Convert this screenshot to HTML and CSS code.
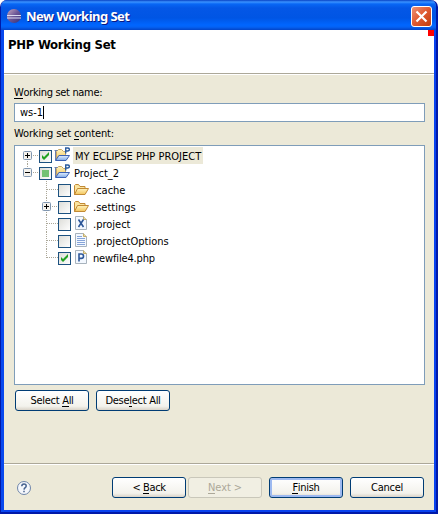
FILE: index.html
```html
<!DOCTYPE html>
<html lang="en">
<head>
<meta charset="utf-8">
<title>New Working Set</title>
<link rel="stylesheet" href="styles.css">
</head>
<body>
<svg width="0" height="0" class="defs">
  <defs>
    <linearGradient id="gold" x1="0" y1="0" x2="0" y2="1"><stop offset="0" stop-color="#fff3bd"/><stop offset="1" stop-color="#f3c55c"/></linearGradient>
    <linearGradient id="blue" x1="0" y1="0" x2="0" y2="1"><stop offset="0" stop-color="#e2efff"/><stop offset="1" stop-color="#7fa9e6"/></linearGradient>
    <linearGradient id="orb" x1="0" y1="0" x2="1" y2="1"><stop offset="0" stop-color="#c9a9bf"/><stop offset=".5" stop-color="#6a5596"/><stop offset="1" stop-color="#343078"/></linearGradient>
    <linearGradient id="box" x1="0" y1="0" x2="1" y2="1"><stop offset="0" stop-color="#dcdcd7"/><stop offset="1" stop-color="#fff"/></linearGradient>
    <symbol id="plus" viewBox="0 0 9 9"><rect x=".5" y=".5" width="8" height="8" rx="1" fill="#f3f1ec" stroke="#8096b0"/><path d="M2 4.500h5M4.500 2v5" stroke="#000"/></symbol>
    <symbol id="minus" viewBox="0 0 9 9"><rect x=".5" y=".5" width="8" height="8" rx="1" fill="#f3f1ec" stroke="#8096b0"/><path d="M2 4.500h5" stroke="#000"/></symbol>
    <symbol id="off" viewBox="0 0 13 13"><rect x=".5" y=".5" width="12" height="12" fill="url(#box)" stroke="#1c5180"/></symbol>
    <symbol id="on" viewBox="0 0 13 13"><rect x=".5" y=".5" width="12" height="12" fill="url(#box)" stroke="#1c5180"/><path d="M3 5v3l2 2 5-5V2L5 7z" fill="#21a121"/></symbol>
    <symbol id="mixed" viewBox="0 0 13 13"><rect x=".5" y=".5" width="12" height="12" fill="url(#box)" stroke="#1c5180"/><rect x="3" y="3" width="7" height="7" fill="#73c273"/></symbol>
    <symbol id="project" viewBox="0 0 16 16"><path d="M2.500 12.500v-8l2-2h3l2 2h2v4h-7z" fill="url(#gold)" stroke="#c7a765"/><path d="M.5 3.500h3M1.500 4v9" fill="none" stroke="#6b7fae"/><path d="M1.500 13.500l3.500-5h10.500l-3.500 5z" fill="url(#blue)" stroke="#3b62b5"/><path d="M11.700 6.500V1h2q1.700 0 1.700 1.500T13.700 4h-2" fill="none" stroke="#2c5c9e" stroke-width="1.400"/></symbol>
    <symbol id="folder" viewBox="0 0 16 16"><path d="M1.500 13.500v-9l1-1h3l1.500 2h5v3h-7z" fill="#fbe5a0" stroke="#c28a35"/><path d="M1.500 13.500l3-6h11l-3.500 6z" fill="url(#gold)" stroke="#c28a35"/></symbol>
    <symbol id="page" viewBox="0 0 16 16"><path d="M2.500 1.500h8l3 3v10h-11z" fill="#f3f8ff" stroke="#a8b3bd"/><path d="M10.500 1.500v3h3" fill="#eddb9c" stroke="#c5ad6a"/></symbol>
  </defs>
</svg>
<main class="window">
  <header class="titlebar">
    <svg class="orb" width="16" height="16" viewBox="0 0 16 16"><circle cx="8" cy="8" r="7" fill="url(#orb)"/><path d="M1 7.500h14M1 10h14" stroke="#dcdcf2"/></svg>
    <h1>New Working Set</h1>
    <svg class="close" width="21" height="21" viewBox="0 0 21 21"><defs><linearGradient id="red" x1="0" y1="0" x2="1" y2="1"><stop offset="0" stop-color="#ec9479"/><stop offset=".5" stop-color="#df5930"/><stop offset="1" stop-color="#c13c0c"/></linearGradient></defs><rect x=".5" y=".5" width="20" height="20" rx="2.500" fill="url(#red)" stroke="#fff"/><path d="M5.500 5.500l10 10M15.500 5.500l-10 10" stroke="#fff" stroke-width="2.200"/></svg>
  </header>
  <section class="banner"><h2>PHP Working Set</h2><i class="mark"></i></section>
  <section class="content">
    <label class="name-label"><u>W</u>orking set name:</label>
    <div class="field"><span>ws-1</span><i class="caret"></i></div>
    <label class="content-label">Working set <u>c</u>ontent:</label>
    <div class="tree">
      <div class="row"><svg class="l1" viewBox="0 0 24 17"><path class="dots" d="M18 8.500h6M12.500 14v3"/><use href="#plus" x="8" y="4" width="9" height="9"/></svg><svg class="check"><use href="#on"/></svg><svg class="icon"><use href="#project"/></svg><span class="text selected">MY ECLIPSE PHP PROJECT</span></div>
      <div class="row"><svg class="l1" viewBox="0 0 24 17"><path class="dots" d="M18 8.500h6M12.500 0v4"/><use href="#minus" x="8" y="4" width="9" height="9"/></svg><svg class="check"><use href="#mixed"/></svg><svg class="icon"><use href="#project"/></svg><span class="text">Project_2</span></div>
      <div class="row"><svg class="l2" viewBox="0 0 43 17"><path class="dots" d="M31.500 0v17M32 8.500h11"/></svg><svg class="check"><use href="#off"/></svg><svg class="icon"><use href="#folder"/></svg><span class="text">.cache</span></div>
      <div class="row"><svg class="l2" viewBox="0 0 43 17"><path class="dots" d="M31.500 0v17M37 8.500h6"/><use href="#plus" x="27" y="4" width="9" height="9"/></svg><svg class="check"><use href="#off"/></svg><svg class="icon"><use href="#folder"/></svg><span class="text">.settings</span></div>
      <div class="row"><svg class="l2" viewBox="0 0 43 17"><path class="dots" d="M31.500 0v17M32 8.500h11"/></svg><svg class="check"><use href="#off"/></svg><svg class="icon"><use href="#page"/><path d="M5.500 4.500l5 7.500M10.500 4.500l-5 7.500" stroke="#2d5799" stroke-width="1.600"/></svg><span class="text">.project</span></div>
      <div class="row"><svg class="l2" viewBox="0 0 43 17"><path class="dots" d="M31.500 0v17M32 8.500h11"/></svg><svg class="check"><use href="#off"/></svg><svg class="icon"><use href="#page"/><path d="M4 4.500h5M4 6.500h8M4 8.500h8M4 10.500h8M4 12.500h8" stroke="#86a4d8"/></svg><span class="text options">.projectOptions</span></div>
      <div class="row"><svg class="l2" viewBox="0 0 43 17"><path class="dots" d="M31.500 0v9M32 8.500h11"/></svg><svg class="check"><use href="#on"/></svg><svg class="icon"><use href="#page"/><path d="M6 12.500v-7.500h2.300q2.200 0 2.200 2.200t-2.200 2.200h-2.300" fill="none" stroke="#2d5799" stroke-width="1.600"/></svg><span class="text newfile">newfile4.php</span></div>
    </div>
    <div class="selection"><button><span>Select <u>A</u>ll</span></button><button><span>Dese<u>l</u>ect All</span></button></div>
  </section>
  <footer>
    <svg class="help" width="16" height="16" viewBox="0 0 16 16"><circle cx="8" cy="8" r="6.500" fill="#f5f7fb" stroke="#6f86aa"/><path d="M5.800 6.300q0-2.300 2.200-2.300t2.200 2q0 1-1 1.700T8 9.700M8 10.700v1.600" fill="none" stroke="#47638f" stroke-width="1.500"/></svg>
    <button class="back">&lt; <u>B</u>ack</button><button class="next" disabled><u>N</u>ext &gt;</button><button class="finish"><u>F</u>inish</button><button class="cancel">Cancel</button>
  </footer>
</main>
</body>
</html>
```
FILE: styles.css
```css
* { box-sizing: border-box; }
body { margin: 0; background: #fff; font: 11px/14px "DejaVu Sans Condensed", "DejaVu Sans", sans-serif; font-stretch: condensed; color: #000; }
.defs { position: absolute; }
u { text-decoration: none; box-shadow: 0 1px #000; display: inline-block; line-height: 11px; }
.window { width: 438px; height: 514px; display: flex; flex-direction: column; background: #ece9d8; border: solid #0019a8; border-width: 0 2px 2px 1px; padding: 0 2px 2px 3px; border-radius: 7px 7px 0 0; overflow: hidden; box-shadow: inset 3px 0 #0848ee, inset -2px -2px #0842ee; }
.titlebar { height: 30px; margin: 0 -2px 0 -3px; flex: none; display: flex; align-items: center; padding: 2px 4px 0 5px; background: linear-gradient(#0842c4 0, #3a92ff 2px, #0867f5 4px, #0457e6 8px, #0055e4 18px, #0066ff 25px, #0462f5 27px, #0344c7 30px); }
.orb { margin-right: 4px; }
h1 { margin: 0; font: bold 13px/18px "Noto Sans", sans-serif; font-stretch: normal; letter-spacing: -.53px; color: #fff; text-shadow: 1px 1px #0a1883; }
.close { margin-left: auto; }
.banner { height: 44px; flex: none; display: flex; justify-content: space-between; background: #fff; border-bottom: 1px solid #aca899; }
h2 { margin: 7px 0 0 4px; font: bold 13px/16px "DejaVu Sans Condensed", "DejaVu Sans", sans-serif; font-stretch: condensed; letter-spacing: -.27px; }
.mark { width: 6px; height: 6px; background: #f00; }
.content { display: flex; flex-direction: column; height: 389px; padding: 11px 9px 0 10px; border-top: 1px solid #fff; }
.content > label { height: 14px; }
.name-label { letter-spacing: -.33px; }
.content > .content-label { margin-top: 5px; letter-spacing: -.15px; }
.field { height: 19px; margin-top: 3px; display: flex; align-items: center; padding-left: 5px; background: #fff; border: 1px solid #7f9db9; }
.caret { width: 1px; height: 13px; background: #000; }
.tree { height: 240px; flex: none; margin-top: 4px; padding-top: 1px; background: #fff; border: 1px solid #7f9db9; }
.row { height: 17px; display: flex; align-items: flex-start; }
.l1 { width: 24px; height: 17px; }
.l2 { width: 43px; height: 17px; }
.dots { stroke: #aca899; stroke-dasharray: 1 1; fill: none; }
.check { width: 13px; height: 13px; margin-top: 3px; }
.icon { width: 16px; height: 16px; margin: 0 3px 0 2px; }
.text { height: 17px; padding: 1px 1px 0; line-height: 17px; white-space: nowrap; }
.selected { padding-left: 2px; padding-right: 2px; background: #ece9d8; }
.newfile { letter-spacing: -.15px; }
.selection { display: flex; gap: 7px; padding: 5px 1px; }
button { width: 74px; height: 21px; padding: 1px 0 0; border: 1px solid #003c74; border-radius: 3px; background: linear-gradient(#fff, #f3f2ec 80%, #d9d3c8); font: inherit; letter-spacing: -.28px; line-height: 18px; color: #000; white-space: nowrap; }
footer { height: 47px; display: flex; align-items: center; border-top: 1px solid #aca899; box-shadow: inset 0 1px #fff; padding: 1px 10px 0 12px; }
.help { margin-right: auto; }
.next { margin-left: 2px; border-color: #c9c7ba; background: #f1efe3; color: #aca899; letter-spacing: -.1px; }
.next u { box-shadow: 0 1px #aca899; }
.finish { margin: 0 7px; box-shadow: inset 0 0 0 2px #9db9f0; }
.back { letter-spacing: -.4px; }
```
